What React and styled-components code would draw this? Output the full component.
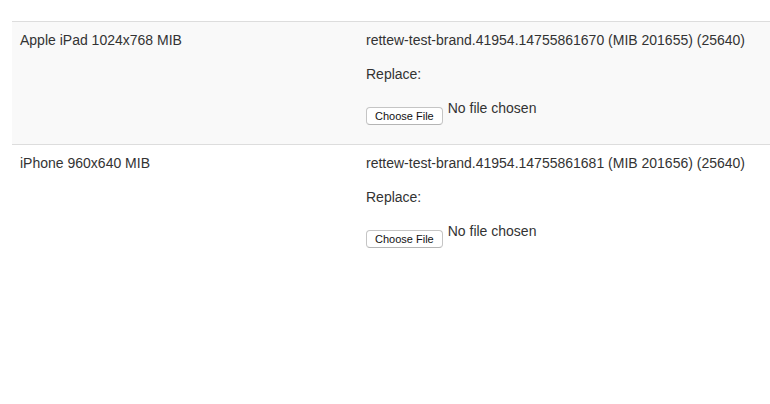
import React from "react";
import styled, { createGlobalStyle } from "styled-components";

const GlobalStyle = createGlobalStyle`
  html, body {
    margin: 0;
    padding: 0;
    background: #fff;
    overflow: hidden;
  }
  body {
    font-family: "Liberation Sans", Arial, sans-serif;
    font-size: 14px;
    line-height: 20px;
    color: #333;
  }
`;

const rows = [
  {
    name: "Apple iPad 1024x768 MIB",
    file: "rettew-test-brand.41954.14755861670 (MIB 201655) (25640)",
  },
  {
    name: "iPhone 960x640 MIB",
    file: "rettew-test-brand.41954.14755861681 (MIB 201656) (25640)",
  },
];

export default function App() {
  return (
    <>
      <GlobalStyle />
      <Page>
        <Table>
          {rows.map((row, i) => (
            <Row key={row.name} striped={i % 2 === 0}>
              <Cell>{row.name}</Cell>
              <Cell>
                <Line>{row.file}</Line>
                <Line>Replace:</Line>
                <FileInput>
                  <ChooseButton type="button">Choose File</ChooseButton>
                  <FileStatus>No file chosen</FileStatus>
                </FileInput>
              </Cell>
            </Row>
          ))}
        </Table>
      </Page>
    </>
  );
}

const Page = styled.div`
  padding-top: 21px;
  padding-left: 12px;
`;

const Table = styled.div`
  border-top: 1px solid #ddd;
`;

const Row = styled.div`
  display: grid;
  grid-template-columns: 346px 1fr;
  background: ${(props) => (props.striped ? "#f9f9f9" : "#fff")};
  & + & {
    border-top: 1px solid #ddd;
  }
`;

const Cell = styled.div`
  padding: 8px;
`;

const Line = styled.div`
  margin-bottom: 14px;
`;

const FileInput = styled.div`
  display: flex;
  align-items: flex-start;
  margin-bottom: 11px;
`;

const ChooseButton = styled.button`
  margin-top: 9px;
  height: 18px;
  padding: 0 8px;
  background: #fff;
  border: 1px solid #c5c5c5;
  border-bottom-color: #b5b5b5;
  border-radius: 4px;
  font-family: "Liberation Sans", Arial, sans-serif;
  font-size: 11px;
  line-height: 16px;
  color: #111;
`;

const FileStatus = styled.span`
  margin-left: 5px;
`;
